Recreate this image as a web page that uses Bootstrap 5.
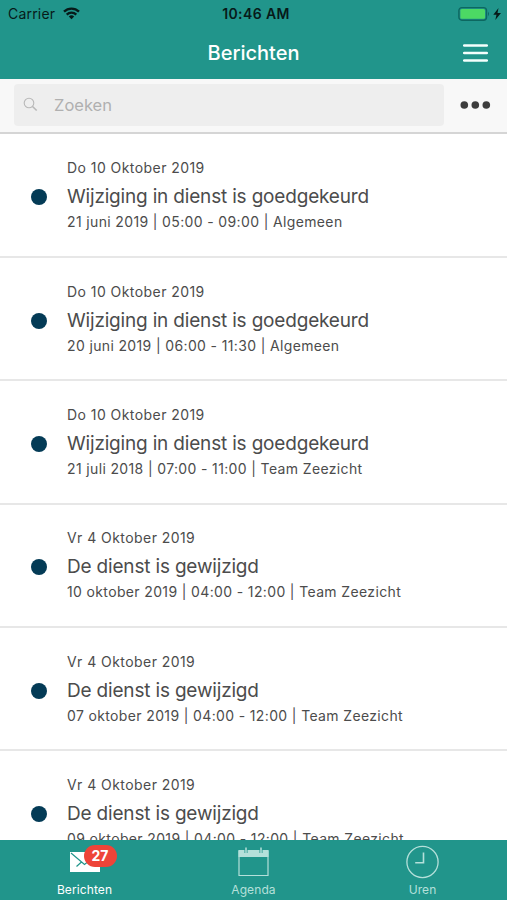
<!DOCTYPE html>
<html lang="nl">
<head>
<meta charset="utf-8">
<meta name="viewport" content="width=device-width, initial-scale=1">
<title>Berichten</title>
<link href="https://cdn.jsdelivr.net/npm/bootstrap@5.3.0/dist/css/bootstrap.min.css" rel="stylesheet">
<style>
body{font-family:Inter,"Liberation Sans",sans-serif;color:#4c4c4c;background:#fff}
svg{display:block}
.app{height:900px}
.teal{background:#21958b}
.status{height:27px;padding:0 5px 0 8px;color:#071a19;font-size:14px}
.carrier{letter-spacing:.2px}
.status .clock{font-weight:600;font-size:14px;letter-spacing:.4px;padding-left:5px;white-space:nowrap}
.titlebar{height:52px;padding:0 19px}
.titlebar h1{font-size:20px;font-weight:500;line-height:24px;letter-spacing:0}
.searchbar{height:55px;background:#f8f8f8;border-bottom:2px solid #d5d5d5;padding:0 16px 2px 14px}
.searchfield{width:430px;height:42px;background:#eee;border-radius:4px;padding-left:9px}
.searchfield input{font-size:16.5px;color:#aaa;margin-left:16px;line-height:24px}
.searchfield input::placeholder{color:#b0b0b0;opacity:1}
.message{height:123.35px;flex:none;border-bottom:2px solid #e7e7e7;padding:23.5px 0 0 31px}
.message:first-child{height:124px;padding-top:24px}
.unread{width:16px;height:16px;border-radius:50%;background:#043b56;margin:31px 20px 0 0}
.date,.detail{font-size:14px;line-height:20px;white-space:nowrap;letter-spacing:.36px}
.date{letter-spacing:.44px}
.subject{font-size:19px;line-height:26px;margin:6px 0 2px;font-weight:400;white-space:nowrap;letter-spacing:-.18px}
.tabbar{height:60px}
.tab{color:#b5e0da;font-size:12px;line-height:14px;letter-spacing:.1px}
.tab.active{color:#fff}
.tab .glyph{height:43px;padding-top:5px}
.count{left:calc(50% - 1px);top:5px;height:22px;width:33px;background:#ee4438;font-size:14px;font-weight:700;line-height:22px;padding:0}
</style>
</head>
<body>
<div class="app d-flex flex-column overflow-hidden">
<header class="teal flex-shrink-0">
  <div class="status d-flex align-items-center position-relative">
    <span class="carrier">Carrier</span>
    <svg class="ms-2" width="17" height="13" viewBox="0 0 17 13" fill="none" stroke="#071a19" stroke-width="2.3"><path d="M1 4.7a10.8 10.8 0 0 1 15 0M3.7 7.6a7 7 0 0 1 9.6 0"/><path d="M8.5 12.2 5.8 9.5a4 4 0 0 1 5.4 0z" fill="#071a19" stroke="none"/></svg>
    <span class="clock position-absolute start-50 translate-middle-x">10:46 AM</span>
    <svg class="ms-auto" width="44" height="16" viewBox="0 0 44 16"><rect x=".9" y="1.6" width="27.6" height="12.6" rx="3" fill="none" stroke="#0d6760" stroke-width="1.4"/><rect x="2.4" y="3" width="24.6" height="9.8" rx="1.5" fill="#4cd964"/><path d="M30 5.6q2 2.3 0 4.6z" fill="#0d6760"/><path d="M40.5 2 35.3 8.8h3.2l-1.2 5.2 5.7-7h-3.5z" fill="#071a19"/></svg>
  </div>
  <div class="titlebar d-flex align-items-center justify-content-end position-relative">
    <h1 class="m-0 text-white position-absolute start-50 translate-middle-x">Berichten</h1>
    <svg width="25" height="20" viewBox="0 0 25 20" stroke="#f4fffd" stroke-width="2.6" stroke-linecap="round"><path d="M1.2 2.5h22.6M1.2 10h22.6M1.2 17.5h22.6"/></svg>
  </div>
</header>
<div class="searchbar d-flex align-items-center justify-content-between flex-shrink-0">
  <label class="searchfield d-flex align-items-center">
    <svg width="15" height="15" viewBox="0 0 15 15" fill="none" stroke="#b8b8b8" stroke-width="1.1"><circle cx="6" cy="6" r="4.8"/><path d="m9.5 9.5 4.2 4" stroke-width="1.6"/></svg>
    <input class="border-0 bg-transparent p-0 flex-grow-1" type="text" placeholder="Zoeken" aria-label="Zoeken">
  </label>
  <svg width="31" height="8" viewBox="0 0 31 8" fill="#3d3d3d"><circle cx="4.3" cy="4" r="3.8"/><circle cx="15.3" cy="4" r="3.8"/><circle cx="26.3" cy="4" r="3.8"/></svg>
</div>
<main class="flex-fill overflow-hidden d-flex flex-column">
  <article class="message d-flex"><span class="unread flex-shrink-0"></span><div><div class="date">Do 10 Oktober 2019</div><h2 class="subject">Wijziging in dienst is goedgekeurd</h2><div class="detail">21 juni 2019 | 05:00 - 09:00 | Algemeen</div></div></article>
  <article class="message d-flex"><span class="unread flex-shrink-0"></span><div><div class="date">Do 10 Oktober 2019</div><h2 class="subject">Wijziging in dienst is goedgekeurd</h2><div class="detail">20 juni 2019 | 06:00 - 11:30 | Algemeen</div></div></article>
  <article class="message d-flex"><span class="unread flex-shrink-0"></span><div><div class="date">Do 10 Oktober 2019</div><h2 class="subject">Wijziging in dienst is goedgekeurd</h2><div class="detail">21 juli 2018 | 07:00 - 11:00 | Team Zeezicht</div></div></article>
  <article class="message d-flex"><span class="unread flex-shrink-0"></span><div><div class="date">Vr 4 Oktober 2019</div><h2 class="subject">De dienst is gewijzigd</h2><div class="detail">10 oktober 2019 | 04:00 - 12:00 | Team Zeezicht</div></div></article>
  <article class="message d-flex"><span class="unread flex-shrink-0"></span><div><div class="date">Vr 4 Oktober 2019</div><h2 class="subject">De dienst is gewijzigd</h2><div class="detail">07 oktober 2019 | 04:00 - 12:00 | Team Zeezicht</div></div></article>
  <article class="message d-flex"><span class="unread flex-shrink-0"></span><div><div class="date">Vr 4 Oktober 2019</div><h2 class="subject">De dienst is gewijzigd</h2><div class="detail">09 oktober 2019 | 04:00 - 12:00 | Team Zeezicht</div></div></article>
</main>
<nav class="tabbar teal row g-0 flex-shrink-0">
  <a class="tab active col text-decoration-none d-flex flex-column align-items-center position-relative" href="#">
    <span class="glyph"><svg width="30" height="32" viewBox="0 0 30 32"><path d="M0 7h30v20H0z" fill="#fff"/><path d="m1 8 13.5 11.5L29 8M6.5 21.5l5-4.5" fill="none" stroke="#21958b" stroke-width="1.2"/></svg></span>
    <span class="count badge rounded-pill position-absolute">27</span>
    <span>Berichten</span>
  </a>
  <a class="tab col text-decoration-none d-flex flex-column align-items-center" href="#">
    <span class="glyph"><svg width="31" height="32" viewBox="0 0 31 32"><path d="M1 6h29v24.5H1z" fill="none" stroke="#b5e0da" stroke-width="1.2"/><path d="M.5 5h30v7H.5z" fill="#b5e0da"/><path d="M8 3v5M23 3v5" stroke="#21958b" stroke-width="3"/><path d="M8 2.5v6M23 2.5v6" stroke="#b5e0da" stroke-width="1.5"/></svg></span>
    <span>Agenda</span>
  </a>
  <a class="tab col text-decoration-none d-flex flex-column align-items-center" href="#">
    <span class="glyph"><svg width="33" height="34" viewBox="0 0 33 34" fill="none" stroke="#b5e0da"><circle cx="16.5" cy="17" r="15.6" stroke-width="1.3"/><path d="M17.5 7.5v10.2H9.2" stroke-width="1.6"/></svg></span>
    <span>Uren</span>
  </a>
</nav>
</div>
<script src="https://cdn.jsdelivr.net/npm/bootstrap@5.3.0/dist/js/bootstrap.bundle.min.js"></script>
</body>
</html>
